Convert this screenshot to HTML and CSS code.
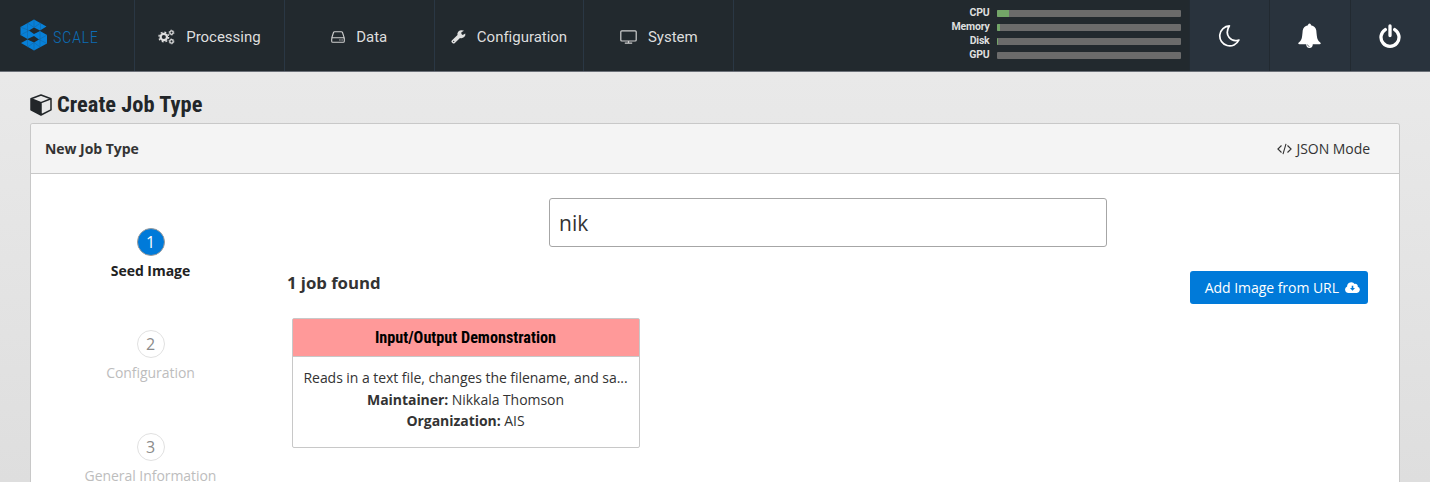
FILE: index.html
```html
<!DOCTYPE html>
<html lang="en">
<head>
<meta charset="utf-8">
<title>Scale - Create Job Type</title>
<link rel="stylesheet" href="styles.css">
</head>
<body>
<header class="topbar">
  <a class="brand">
    <svg class="brand-mark" width="28" height="32" viewBox="0 0 28 32">
      <path fill="#0780d8" d="M14 .5 26.500 7.500 20 11.500 14 8.500 9 11.500 14 15 20 12 27 16V24.500L14 31.500 1 24 7.500 20.500 14 23.500 19 20.500 14 17 7.500 20 .5 16V8Z"/>
      <path fill="none" stroke="#17609a" stroke-width=".5" d="M14 .5V8.500M7.500 4V20M7.500 4 14 8.500 20.500 4V11M.5 8 9 11.500M.5 16 9 11.500M20 12V28L14 23.500V31.500M14 23.500 7.500 28V20.500M19 20.500 27 24.500M19 20.500 27 16"/>
    </svg>
    <span class="brand-name">SCALE</span>
  </a>
  <nav class="nav">
    <a class="nav-item"><svg class="gears" width="17" height="16" viewBox="0 0 17 16" fill="none" stroke="#dedede">
      <circle cx="5.800" cy="8" r="3.200" stroke-width="2.200"/><circle cx="5.800" cy="8" r="4.900" stroke-width="1.300" stroke-dasharray="1.900 1.950"/>
      <circle cx="13.500" cy="3.600" r="1.700" stroke-width="1.300"/><circle cx="13.500" cy="3.600" r="2.500" stroke-width=".8" stroke-dasharray="1.300 1.310"/>
      <circle cx="13.500" cy="12.400" r="1.700" stroke-width="1.300"/><circle cx="13.500" cy="12.400" r="2.500" stroke-width=".8" stroke-dasharray="1.300 1.310"/></svg><span>Processing</span></a>
    <a class="nav-item"><svg width="14" height="12" viewBox="0 0 14 12" fill="none" stroke="#d0d0d0" stroke-width="1.100">
      <path d="M.7 7 2.500 1.500Q2.800.7 3.600.7H10.400Q11.200.7 11.500 1.500L13.300 7V10.200Q13.300 11.300 12.200 11.300H1.800Q.7 11.300.7 10.200V7.800Q.7 6.700 1.800 6.700H12.200Q13.300 6.700 13.300 7.800"/><path d="M8.300 9H9.500M10.500 9H11.700"/></svg><span>Data</span></a>
    <a class="nav-item"><svg width="15" height="14" viewBox="0 0 15 14"><path fill="#e0e0e0" fill-rule="evenodd" d="M10.400.2Q12 .1 13 .8L10.400 2.300V4.100L11.700 5 14.300 3.500Q14.800 5.500 13.200 7.100 11.300 8.800 9 8L3.600 13.200Q2.700 14 1.700 13.200L.7 12.200Q0 11.300.8 10.400L6.500 5.100Q5.900 3 7.400 1.400 8.700.2 10.400.2ZM2.700 10.800A.6.600 0 1 0 2.700 12 .6.600 0 1 0 2.700 10.800Z"/></svg><span>Configuration</span></a>
    <a class="nav-item"><svg width="17" height="14" viewBox="0 0 17 14" fill="none" stroke="#d0d0d0" stroke-width="1.200"><rect x=".8" y=".8" width="15.400" height="10.200" rx="1"/><path d="M8.500 11V13M4.800 13.100H12.200"/></svg><span>System</span></a>
  </nav>
  <div class="usage">
    <div class="usage-row"><span>CPU</span><div class="meter"><i style="width:7%"></i></div></div>
    <div class="usage-row"><span>Memory</span><div class="meter"><i style="width:1.800%"></i></div></div>
    <div class="usage-row"><span>Disk</span><div class="meter"><i style="width:1%"></i></div></div>
    <div class="usage-row"><span>GPU</span><div class="meter"></div></div>
  </div>
  <div class="actions">
    <a class="action"><svg width="22" height="22" viewBox="0 0 22 22"><path fill="none" stroke="#fff" stroke-width="1.700" stroke-linejoin="round" d="M11.400.9A10 10 0 1 0 20.900 15C13.500 17.500 5.500 10.500 11.400.9Z"/></svg></a>
    <a class="action"><svg width="23" height="26" viewBox="0 0 23 26"><path fill="#fff" d="M11.500.5Q13 .5 13 2.200 17.500 3 18.300 7.500 18.800 14 19.500 16 20.200 18.200 22.500 19.800 23.300 21.300 21.500 21.300H14.800Q14.800 25 11.500 25T8.200 21.300H1.500Q-.3 21.300.5 19.800 2.800 18.200 3.500 16 4.200 14 4.700 7.500 5.500 3 10 2.200 10 .5 11.500.5Z"/><path fill="none" stroke="#29333d" stroke-width=".6" d="M9.500 21.500Q9.700 23.400 11.500 23.500"/></svg></a>
    <a class="action"><svg width="22" height="24" viewBox="0 0 22 24" fill="none" stroke="#fff" stroke-width="3.300" stroke-linecap="round"><path d="M11 2V11.500M6.300 5.600A9 9 0 1 0 15.700 5.600"/></svg></a>
  </div>
</header>
<main class="page">
  <h1 class="title"><svg width="22" height="22" viewBox="0 0 22 22"><path fill="none" stroke="#222629" stroke-width="1.500" stroke-linejoin="round" d="M11 1 21 4.700V15.800L11 21 1 15.800V4.700ZM1 4.700 11 8.600 21 4.700M11 8.600V21"/><path fill="#222629" d="M1 4.700 11 8.600V21L1 15.800Z"/></svg><span class="condensed">Create Job Type</span></h1>
  <section class="panel">
    <div class="panel-head"><b>New Job Type</b><a class="json"><svg width="15" height="12" viewBox="0 0 15 12" fill="none" stroke="#333" stroke-width="1.100"><path d="M4.500 2.500.9 6 4.500 9.500M10.500 2.500 14.100 6 10.500 9.500M9 .8 6 11.200"/></svg><span>JSON Mode</span></a></div>
    <div class="panel-body">
      <ol class="steps">
        <li class="step current"><span class="num">1</span><span>Seed Image</span></li>
        <li class="step"><span class="num">2</span><span>Configuration</span></li>
        <li class="step last"><span class="num">3</span><span>General Information</span></li>
      </ol>
      <div class="content">
        <input class="search" type="text" value="nik">
        <div class="results-head"><h2>1 job found</h2>
          <button class="add"><span>Add Image from URL</span><svg width="15" height="11" viewBox="0 0 15 11"><path fill="#fff" d="M3.500 10.900A3.400 3.400 0 0 1 2.100 4.400 4.200 4.200 0 0 1 9.700 2 2.300 2.300 0 0 1 12.700 4.700 3.200 3.200 0 0 1 12 10.900Z"/><path fill="#007ad9" d="M6.700 3.700H8.300V6H10L7.500 8.700 5 6H6.700Z"/></svg></button>
        </div>
        <article class="card">
          <h3><span class="condensed">Input/Output Demonstration</span></h3>
          <div class="card-body">
            <p>Reads in a text file, changes the filename, and sa...</p>
            <p><b>Maintainer:</b> Nikkala Thomson</p>
            <p><b>Organization:</b> AIS</p>
          </div>
        </article>
      </div>
    </div>
  </section>
</main>
</body>
</html>
```
FILE: styles.css
```css
* { box-sizing: border-box; }
body { margin: 0; height: 482px; overflow: hidden; font: 14px/21.500px "Open Sans", sans-serif; letter-spacing: -.05px; color: #333; background: linear-gradient(#ebebeb, #dedede); }
svg { flex: none; }
h1, h2, h3, p { margin: 0; }
.topbar { display: flex; height: 72px; background: #22292e; border-bottom: 1px solid #6b7078; }
.brand { width: 135px; padding: 19px 0 0 20px; display: flex; gap: 5px; border-right: 1px solid #2a3744; }
.brand-name { font: 300 16.500px/38px "Roboto Condensed", Roboto, sans-serif; font-stretch: 75%; letter-spacing: .550px; color: #0c6cb4; }
.nav { display: flex; }
.nav-item { width: 149.800px; display: flex; align-items: center; justify-content: center; gap: 11px; padding-top: 3px; border-right: 1px solid #2a3744; font: 15px/20px Roboto, sans-serif; letter-spacing: -.02px; color: #dedede; }
.usage { margin-left: auto; width: 236px; padding-top: 6px; }
.usage-row { height: 14px; display: flex; align-items: center; gap: 7px; font: 700 10.500px/14px Roboto, sans-serif; letter-spacing: -.2px; color: #dedede; }
.usage-row span { width: 37px; padding-top: 0; display: flex; justify-content: flex-end; white-space: nowrap; }
.meter { width: 184px; height: 7px; background: #6b6b6b; border-radius: 1px; overflow: hidden; }
.meter i { display: block; height: 100%; background: #73a668; }
.actions { display: flex; }
.action { width: 80.500px; display: flex; align-items: center; justify-content: center; padding-right: 1px; background: #29333d; border-left: 1px solid #222a31; }
.page { padding: 21px 30px 0; }
.title { height: 24px; display: flex; align-items: center; gap: 5px; color: #222629; font-size: 22.400px; line-height: 24px; letter-spacing: 0; }
.title .condensed { height: 24px; line-height: 23px; letter-spacing: .05px; }
.condensed { font-family: "Roboto Condensed", Roboto, sans-serif; font-stretch: 75%; font-weight: 700; }
.panel { margin-top: 6px; height: 359px; border: 1px solid #c8c8c8; border-bottom: 0; border-radius: 3px 3px 0 0; background: #fff; }
.panel-head { height: 50px; padding: 0 29px 0 14px; display: flex; align-items: center; justify-content: space-between; background: #f4f4f4; border-bottom: 1px solid #c8c8c8; border-radius: 2px 2px 0 0; }
.json { display: flex; align-items: center; gap: 5px; }
.panel-body { display: flex; height: 308px; }
.steps { list-style: none; margin: 0; padding: 54px 0 0; width: 239px; }
.step { height: 102.400px; display: flex; flex-direction: column; align-items: center; gap: 4px; color: #bdbdbd; }
.last { height: 49px; }
.num { flex: none; width: 28px; height: 28px; border: 1px solid #e1e1e1; border-radius: 50%; text-align: center; font-size: 16px; line-height: 26px; color: #8b8b8b; }
.current { color: #222; font-weight: 700; }
.current .num { color: #fff; background: #007ad9; border-color: #9b9b9b; font-weight: 400; }
.content { width: 1116px; padding: 24px 17px 0; display: flex; flex-direction: column; }
.search { align-self: center; width: 558px; height: 49px; padding: 0 9px; border: 1px solid #a6a6a6; border-radius: 3px; font: 21px "Open Sans", sans-serif; color: #333; outline: none; }
.results-head { display: flex; justify-content: space-between; padding: 24px 1px 0 0; }
.results-head h2 { font-size: 16.800px; line-height: 23px; }
.add { display: flex; align-items: center; justify-content: flex-end; gap: 6px; width: 178px; height: 33px; padding: 0 8px 0 0; border: 0; border-radius: 3px; background: #007ad9; color: #fff; font: 14px "Open Sans", sans-serif; letter-spacing: -.04px; }
.card { margin: 14px 0 0 4.500px; width: 348px; height: 130px; border: 1px solid #c8c8c8; border-radius: 2px; text-align: center; }
.card h3 { height: 38px; line-height: 36px; font-size: 16.200px; letter-spacing: 0; color: #000; background: #ff9999; border-bottom: 1px solid #c8c8c8; }
.card-body { padding-top: 10px; }
```
